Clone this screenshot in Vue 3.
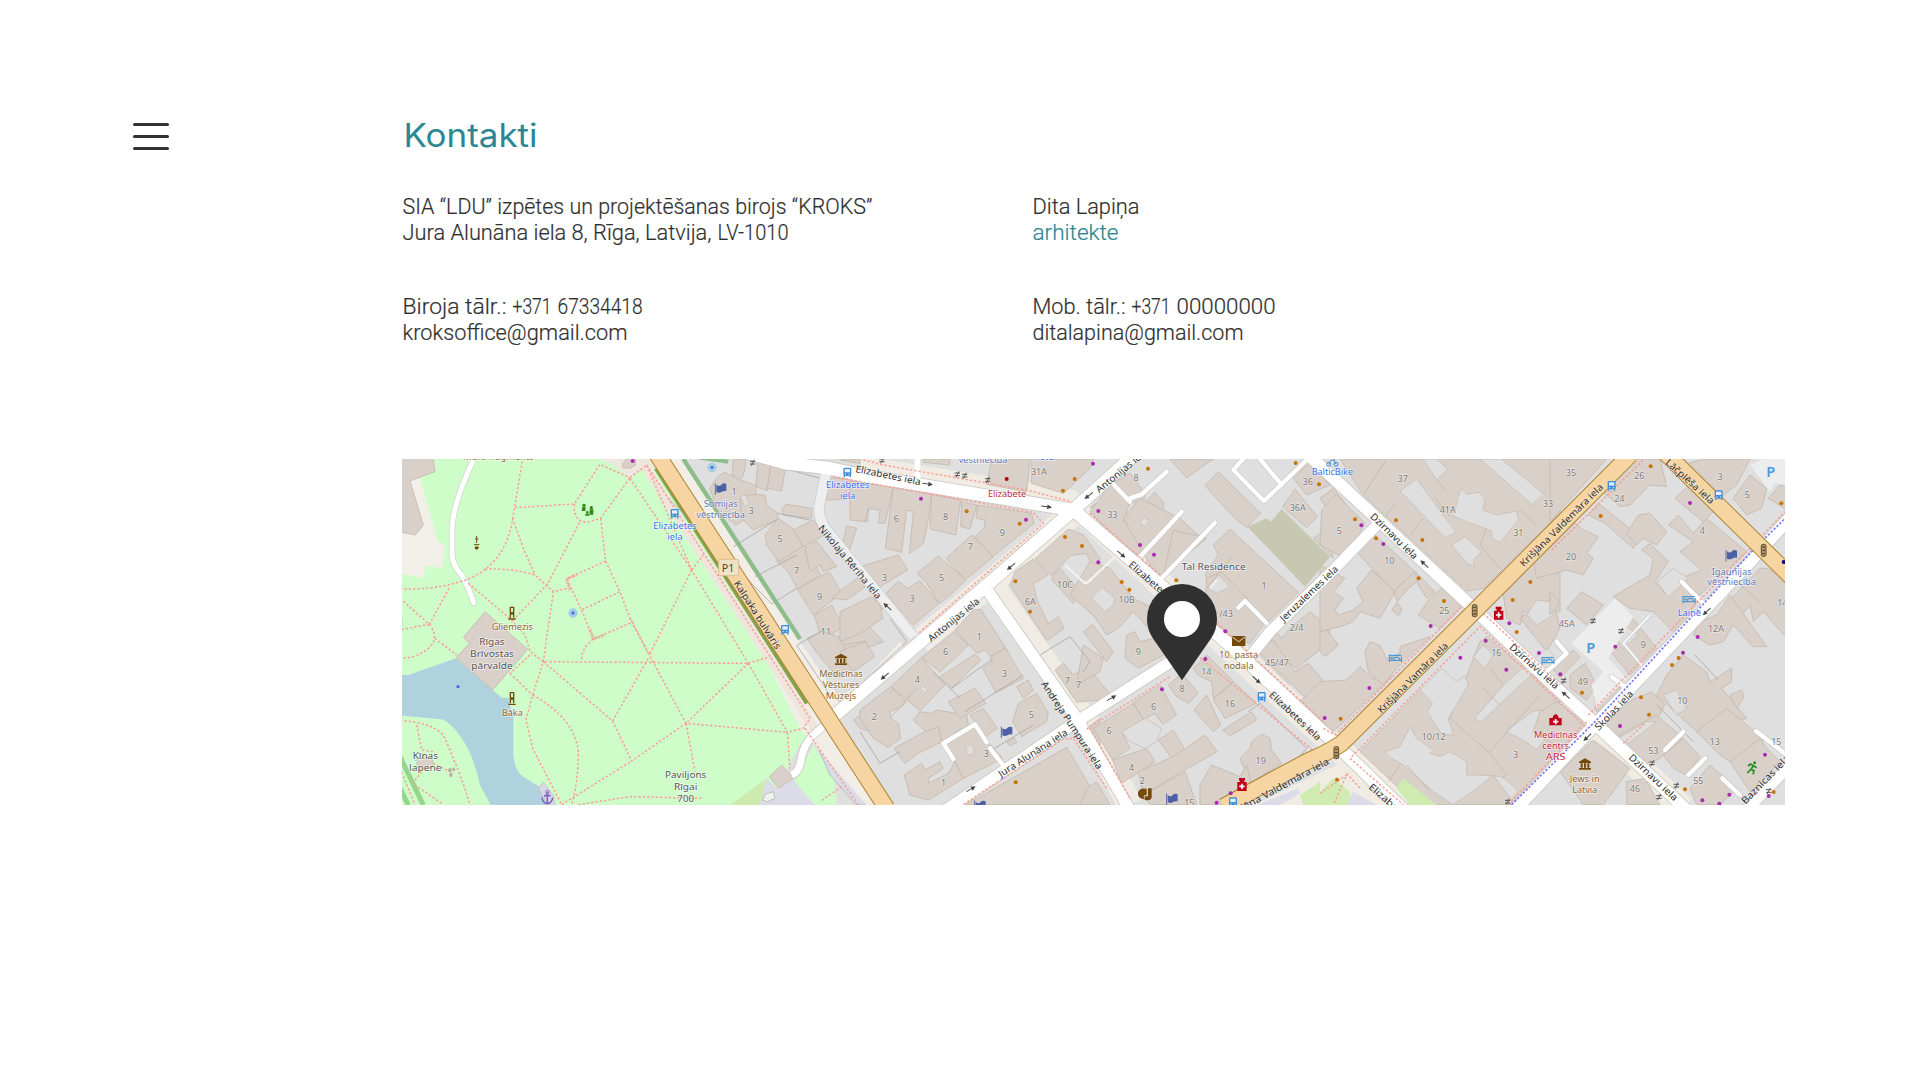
<script setup>
// The map is drawn on a grid of three units per pixel, in six side-by-side tiles.
const TILE = 690

const office = [
  [[['SIA “LDU” izpētes un projektēšanas birojs “KROKS”', 0, 470]], [['Jura Alunāna iela 8, Rīga, Latvija,', 0, 309], ['LV-1010', 315, 71]]],
  [[['Biroja tālr.:', 0, 104], ['+371', 110, 39], ['67334418', 155, 85]], [['kroksoffice@gmail.com', 0, 225]]],
]
const person = [
  [[['Dita Lapiņa', 0, 107]], [['arhitekte', 0, 86]]],
  [[['Mob. tālr.:', 0, 93], ['+371', 99, 39], ['00000000', 144, 99]], [['ditalapina@gmail.com', 0, 211]]],
]

const buildings = [
  [
    '0,0 98,0 105,50 30,78 70,210 46,240 0,230',
    '255,470 340,545 383,583 278,705 168,608 208,565 190,547',
    '50,925 60,908 92,905 100,925 92,938 55,940',
    '680,12 706,12 706,30 690,40 668,38 668,26',
  ],
  [
    '310,12 348,12 345,45 335,70 306,60', '385,12 425,12 412,107 377,95', '425,12 470,12 455,108 412,100',
    '240,100 262,65 285,52 318,70 379,92 375,130 360,180 318,210 262,165',
    '330,125 372,118 405,120 410,150 445,175 440,195 370,225 335,190',
    '405,240 445,190 490,222 525,280 445,320 410,270', '445,320 525,270 572,360 502,402 475,350 440,318',
    '490,225 550,195 582,240 520,275', '525,280 560,258 620,335 580,350 570,330 540,350',
    '502,402 598,350 635,415 550,480', '553,480 605,450 642,515 575,555', '532,550 575,530 625,545 660,600 690,625 625,670 558,590',
    '625,545 700,495 760,560 660,600', '640,570 708,558 718,590 660,625', '455,165 468,148 545,160 545,190 460,180',
    '650,212 680,220 655,295 635,285', '590,65 720,85 715,130 590,135', '690,130 720,130 712,200 680,195',
    '605,430 640,400 690,365 720,385 650,435', '660,475 760,415 775,450 690,512',
    '418,965 455,930 490,970 445,1000', '670,795 710,765 720,760 720,830 690,820',
  ],
  [
    '-30,80 100,95 75,205 55,205 60,165 25,160 15,200 -30,195', '100,95 215,118 205,195 190,265 148,295 160,170 140,165 125,292 76,280',
    '215,118 302,135 287,240 210,222', '305,140 350,150 330,222 302,215', '352,150 515,175 522,205 398,305 345,245 372,220 375,195 348,190',
    '335,240 400,305 315,375 258,310', '235,303 318,375 260,430 238,445 200,385 172,355', '115,378 142,400 180,378 237,445 160,510 78,415',
    '0,335 115,300 143,345 60,395', '-60,470 35,425 60,450 68,490 0,535 -60,560', '-60,590 15,560 45,605 -20,650',
    '-60,12 0,12 0,25 -60,15', '395,12 510,12 500,110 380,88', '515,12 700,12 690,40 610,115 515,85', '190,12 270,12 268,30 190,22',
    '340,465 362,462 438,580 392,605 375,585 350,595 285,525', '283,530 325,570 315,580 240,650 185,607',
    '240,665 345,598 362,615 275,700', '437,580 490,670 408,713 368,640 395,620 390,605',
    '185,607 220,650 255,690 180,767 93,695', '470,695 505,675 520,705 490,730', '475,745 530,715 565,775 560,800 485,845 458,800',
    '0,765 92,695 138,740 125,755 90,770 92,790 115,805 122,850 85,877 40,850 0,790', '160,795 180,770 215,775 230,765 320,780 325,810 235,865',
    '265,740 295,725 345,700 378,745 300,790', '330,780 370,760 412,820 375,845', '102,880 185,835 235,815 245,860 175,895 135,925',
    '133,960 185,925 195,945 240,920 250,940 205,970 205,985 265,955 285,920 310,970 205,1035 150,1020',
    '245,862 340,815 428,910 310,970 285,920', '465,350 520,312 565,360 520,385 530,435 565,505 595,485 612,520 560,557 450,390',
    '525,312 625,222 670,240 720,310 700,345 680,295 630,302 575,362', '580,360 600,340 660,410 640,445 575,375', '650,435 720,365 720,500',
    '670,530 698,508 760,590 740,620 685,550', '585,645 610,625 640,660 680,632 760,730 650,742',
    '318,1049 620,877 670,960 720,1049', '680,820 720,790 720,880', '690,155 740,130 790,170 740,190', '440,862 462,848 470,862 450,872',
  ],
  [
    '60,90 120,55 165,115 160,145 120,140 100,200 210,255 130,310 0,170', '160,145 195,112 222,145 215,190 160,190',
    '100,190 150,130 270,190 330,245 235,335 205,375', '250,225 350,250 220,360', '240,12 370,12 290,68',
    '345,92 385,50 512,175 470,218 435,190', '578,155 615,102 682,185 650,218', '610,70 655,25 720,90 650,120',
    '420,222 625,412 535,500 460,430 430,460 375,420 345,360 385,300 370,270', '350,370 395,350 480,440 520,510 480,565 400,535 345,450',
    '0,320 60,340 130,430 210,470 180,525 130,470 85,520 50,540 10,480 -60,420', '110,540 135,530 150,560 190,550 230,595 145,640 105,610',
    '545,515 575,550 600,520 660,470 720,520 720,560 620,640 545,590 520,600',
    '495,580 550,555 615,650 655,625 720,700 720,800', '-20,570 40,610 30,650 -40,690',
    '235,690 275,655 325,715 295,745 260,725', '310,640 350,600 430,680 370,730 365,680 325,660', '430,680 500,745 405,790 370,735',
    '130,742 210,690 260,780 218,808 195,775 160,795', '10,820 130,745 160,795 95,830 120,880 68,915', '68,915 170,880 195,920 95,985',
    '205,855 250,825 285,885 245,910', '145,950 250,905 345,840 382,890 275,950 160,1020', '312,765 350,720 392,810 370,830',
    '398,825 485,770 500,795 420,842', '450,910 480,880 485,860 515,838 540,850 545,885 575,925 480,985', '330,990 365,930 450,965 470,930 485,990 395,1049 330,1049',
    '160,1020 285,950 320,1049 180,1049', '-10,1000 20,980 60,1049 -30,1049', '670,250 710,220 730,310', '690,130 730,100 770,150 730,190',
  ],
  [
    '60,12 200,12 130,120', '200,12 720,12 720,175 490,400 440,408 130,120',
    '5,165 48,118 135,205 75,310 0,270',
    '110,290 165,240 285,350 220,410', '220,410 285,350 305,370 265,400 232,440', '285,350 345,410 320,430 295,390', '330,430 370,395 430,450 360,520 295,480',
    '0,330 75,370 40,410 70,430 45,465 55,480 100,465 130,440 110,400 155,345 225,410 180,490 120,470 100,500 60,515 0,530', '0,530 20,525 55,570 15,605 0,590',
    '215,465 232,442 246,465 235,482', '0,680 80,675 120,635 165,675 180,650 215,665 40,830 -60,740',
    '135,590 150,560 180,570 200,612 240,595 240,575 330,545 230,640 190,690 145,650',
    '120,890 300,705 390,790 480,560 500,545 720,730 720,900 590,1049 290,1049',
    '545,380 720,200 720,470 610,470 600,510 560,490',
    '600,490 660,450 700,430 720,520 680,590',
  ],
  [
    '0,12 170,12 0,200', '195,12 330,12 350,95 300,90 240,150 210,155 145,100', '115,180 145,145 270,245 250,280 165,205',
    '375,130 430,80 490,170 460,200', '400,30 460,12 600,12 560,90 480,150', '550,130 600,60 650,100 635,160 590,180', '655,130 690,90 720,100 720,170',
    '-60,260 75,205 100,225 145,245 110,295 130,310 100,360 50,345 -40,370', '230,235 265,180 300,175 350,230 320,270 280,250 260,270',
    '275,285 300,265 355,320 315,380 350,420 370,395 400,385 440,440 380,540 310,470 240,460 190,425 300,360 310,310', '355,210 385,180 430,235 470,190 590,290 450,420 390,370 455,345 390,290 430,260',
    '170,575 245,485 320,580 240,660', '50,460 95,410 160,450 110,510', '0,410 30,440 0,480',
    '60,660 105,625 140,690 110,735 60,700', '0,630 70,585 90,605 30,670', '545,430 630,340 655,340 720,390 720,560 640,470 610,500 600,450 575,480',
    '430,540 450,500 500,480 540,420 650,575 610,575 550,510 520,560 480,570', '350,660 400,600 470,650 480,680 545,640 545,680 515,700 590,790 440,830 320,720',
    '540,720 575,705 582,725 560,760', '440,830 530,760 640,850 600,960 510,900',
    '245,735 305,710 345,750 300,830 185,850 170,800', '190,850 320,780 400,850 330,910 280,930',
    '340,900 400,850 450,905 410,960 370,940', '30,950 130,855 240,940 160,1049 100,1049', '230,980 285,970 330,1049 230,1049', '420,1000 480,930 560,1000 510,1049 440,1049',
    '540,920 630,850 650,880 690,920 600,1010', '-30,770 20,740 100,800 50,890 -50,830', '130,700 185,670 225,715 140,770',
  ],
]

// courtyards cut into the blocks
const yards = [
  [], ['330,125 345,118 358,145 345,155'],
  ['180,700 188,690 202,705 195,715', '318,880 330,868 343,880 340,898 322,900'],
  ['5,430 35,395 75,430 70,450 45,470', '150,205 162,185 178,200 165,215', '355,400 385,360 420,395 380,415', '95,830 165,790 215,820 200,860 165,880 120,860'],
  [
    '240,108 290,72 408,232 375,248', '415,125 425,100 440,118 480,112 495,135 488,165 530,180 590,168 595,195 540,262 515,250 515,228 440,200 395,180 410,150',
    '480,12 545,12 675,120 640,152', '310,12 350,12 383,42 350,75', '395,270 435,245 485,290 460,315 465,335 440,325',
    '460,605 490,570 520,600 495,640', '300,705 365,640 410,680 435,663 445,690 385,790 400,840 365,838 322,770 338,745', '462,792 560,680 680,580 700,600 590,700 485,800',
    '195,890 240,875 270,815 290,850 340,885 330,895 360,905 390,890 440,920 440,960 480,960 545,965 595,1005 575,1035 520,960 470,1000 400,1049 340,1010 250,930 215,910',
    '555,830 640,768 695,765 715,800 650,885 625,865 590,845', '620,480 650,435 690,440 700,480 650,510',
  ],
  ['320,380 370,340 415,370 355,425', '340,720 380,705 410,760 380,780', '200,550 230,515 265,540 220,580', '290,800 320,800 235,865 205,850'],
]

const seams = 'M2985,145L2945,200M3070,190L3030,240M3105,130L3150,185M3260,220L3240,270L3300,340M3360,165L3410,215M3110,75L3140,110M3395,150L3440,105M3000,930L2965,980M3020,930L3090,1010M3150,790L3270,895L3320,960L3305,970M3270,890L3420,720M3270,640L3310,690M3250,700L3300,750M2370,275L2320,330M2500,300L2420,400M2560,580L2670,690M3960,340L4080,440M1550,700L1470,790'

const park = '0,0 760,0 1280,840 1200,870 1150,960 1200,980 1180,1060 0,1060'

const whiteRoads = [
  { d: 'M1030,-10 L1160,25 L1290,40 L1380,60 L2020,165 L2480,562 L2800,860 L3010,1065', w: 38 },
  { d: 'M2225,-20 L2020,165 L1755,395 L1275,806', w: 38 },
  { d: 'M1765,410 L2030,790 L2190,1065', w: 34 },
  { d: 'M1640,1063 L2030,800 L2300,628 L2400,560', w: 34 },
  { d: 'M2550,605 L2610,530 L2800,345 L2935,205', w: 32 },
  { d: 'M2715,-10 L2930,190 L3215,455 L3460,690 L3590,810 L3860,1065', w: 36 },
  { d: 'M3345,1065 L3575,820 L3690,700 L4060,310 L4190,165', w: 36 },
  { d: 'M4040,1065 L4170,930', w: 32 },
  { d: 'M1280,808 Q1215,850 1205,905 Q1200,950 1175,960', w: 22 },
]

const alleys = [
  'M1660,912 L1630,865 L1725,808 L1760,862', 'M1770,880 L1805,925',
  'M2140,88 L2190,140 M2190,130 L2225,118 L2300,50', 'M2220,305 L2345,170', 'M2280,375 L2445,203', 'M2600,505 L2535,438 L2515,458',
  'M2540,0 L2500,45 L2592,138 L2720,15 M2570,0 L2645,90', 'M3470,560 L3500,595 L3440,650',
  'M3845,380 L3915,450', 'M3795,885 L3850,830', 'M3865,960 L3915,910', 'M3967,970 L4020,1020', 'M4068,828 L4160,900', 'M3635,665 L3680,700',
]

const footpaths = [
  'M0,402 Q120,405 210,370 Q320,320 338,190 L368,12', 'M345,158 L523,147 L600,28 L690,68', 'M523,147 Q520,200 560,202 L602,190 L690,68',
  'M338,190 L370,280 L405,360 M255,343 Q330,338 405,360 L460,410', 'M538,203 L442,388 L335,500', 'M602,190 L617,318 L660,410 L690,490 L748,600',
  'M617,318 L500,372 L545,465 L660,410', 'M500,400 L460,410 L430,620 L398,720 L378,795 L398,880 L485,1049', 'M545,465 L580,552 L700,500 M580,552 Q545,580 545,612',
  'M205,385 L335,495 L375,540 L390,590 L430,620 L1040,625', 'M430,620 L638,798 L745,610', 'M638,798 L695,918 L858,805', 'M398,720 Q525,790 535,890 Q535,980 515,1049',
  'M485,1049 L695,918 M535,1049 L690,1025 L910,1030', 'M330,655 L398,720 M390,600 L330,655', 'M0,430 L88,508 Q120,550 85,580 Q50,610 0,610 M88,508 L0,525 M88,508 L150,395 M105,550 L170,600',
  'M0,797 Q90,800 130,840 Q180,950 210,1049 M50,810 L65,885 L100,890 M100,925 L160,955 M65,950 L38,985 L130,1049 M0,940 L45,1049',
  'M690,68 L740,30 L875,345 L1045,625 M690,490 L748,600 L858,805 L1162,832 L1170,940', 'M740,30 L1230,790 L1210,820 L1162,832', 'M875,345 L910,300 M875,345 L748,600 M1045,625 L1110,605 M1045,625 L858,805 L885,950 M1045,625 L1162,832',
  'M690,70 L875,345', 'M1215,820 L1375,1049 M1325,995 L1260,1040', 'M1390,15 L1450,30 L1880,105 L2015,140', 'M1300,65 L1380,80 L1900,172 L1930,205 L1555,535',
  'M1680,1055 L1990,852 L2020,850 L2120,1000', 'M2060,822 L2310,665 M2070,820 L2190,1030', 'M2070,175 L2280,360 M2440,495 L2770,800 M2390,600 L2750,895', 'M2760,1015 L2840,960 L2800,1049',
  'M2770,820 L2805,840 L3185,455', 'M2855,905 L3240,515 L3560,820 M3250,475 L3480,690', 'M2850,910 L3010,1049',
  'M3455,285 L3730,15', 'M3565,780 L4050,280 L4155,170', 'M3325,1049 L3560,800', 'M3670,865 L3735,805', 'M2840,955 L2880,1000',
]

const outlines = [
  'M1000,275 L1130,195 M1065,365 L1190,300 M805,130 L1115,447 L1190,400 M1190,570 L1290,720 L1320,740 L1500,590 M1192,570 L1270,525', 'M1133,175 L1230,195', 'M1065,15 L1260,70',
  'M1600,650 L1680,730 M1655,700 L1780,610 M1695,770 L1870,660', 'M1380,830 L1440,925 L1500,890 M1750,900 L1900,810', 'M1920,600 L2010,545 L2070,620 L2050,650 M1920,600 L2000,730',
  'M2545,770 L2580,745 L2720,880 L2690,915 L2560,990', 'M3885,600 L3955,675 M3770,750 L3880,860', 'M1470,490 L1520,560 L1390,680',
]

const streets = [
  [1008, 380, 1135, 580, 'Kalpaka bulvāris'], [1260, 215, 1438, 428, 'Nikolaja Rēriha iela'],
  [1367, 42, 1562, 82, 'Elizabetes iela'], [1588, 555, 1735, 435, 'Antonijas iela'], [1930, 682, 2100, 940, 'Andreja Pumpura iela'],
  [1798, 960, 2000, 830, 'Jura Alunāna iela'], [2092, 108, 2225, -1, 'Antonijas iel'], [2190, 325, 2285, 408, 'Elizabete'],
  [2612, 715, 2758, 852, 'Elizabetes iela'], [2645, 495, 2810, 338, 'Jeruzalemes iela'], [2525, 1060, 2785, 918, 'jāna Valdemāra iela'],
  [2915, 180, 3048, 308, 'Dzirnavu iela'], [3365, 330, 3605, 92, 'Krišjāna Valdemāra iela'], [2938, 770, 3140, 568, 'Krišjāna Vamāra iela'],
  [3332, 572, 3472, 697, 'Dzirnavu iela'], [3800, 18, 3938, 142, 'Lāčplēša iela'], [3590, 822, 3695, 712, 'Skolas iela'],
  [3690, 903, 3828, 1033, 'Dzirnavu iela'], [4030, 1043, 4165, 905, 'Baznicas iela'], [2910, 992, 3000, 1070, 'Elizabet'],
].map(([x1, y1, x2, y2, t]) => ({
  t, x: (x1 + x2) / 2, y: (y1 + y2) / 2,
  a: (Math.atan2(y2 - y1, x2 - x1) * 180) / Math.PI, l: Math.hypot(x2 - x1, y2 - y1),
}))

const names = [
  [295, 16, 'Mūra fragments', 'brown', 212], [337, 526, 'Gliemezis', 'brown', 124], [276, 571, 'Rīgas', 'dark', 76], [276, 607, 'Brīvostas', 'dark', 132], [276, 643, 'pārvalde', 'dark', 124],
  [337, 782, 'Bāka', 'brown', 62], [76, 912, 'Ķīnas', 'dark', 76], [76, 949, 'lapene', 'dark', 98],
  [825, 221, 'Elizabetes', 'blue', 130], [825, 254, 'iela', 'blue', 46], [962, 156, 'Somijas', 'violet', 102], [962, 189, 'vēstniecība', 'violet', 146],
  [1343, 99, 'Elizabetes', 'blue', 130], [1343, 132, 'iela', 'blue', 46], [1323, 665, 'Medicīnas', 'brown', 130], [1323, 698, 'Vēstures', 'brown', 110], [1323, 731, 'Muzejs', 'brown', 92],
  [857, 968, 'Paviljons', 'dark', 124], [857, 1005, 'Rīgai', 'dark', 70], [857, 1041, '700', 'dark', 50],
  [1749, 25, 'vēstniecība', 'violet', 146], [1821, 127, 'Elizabete', 'red', 114], [1933, 16, 'Hotel', 'blue', 70],
  [2441, 345, 'Tal Residence', 'dark', 192], [2516, 608, '10. pasta', 'brown', 116], [2516, 641, 'nodaļa', 'brown', 90],
  [2797, 60, 'BalticBike', 'blue', 124], [3467, 850, 'Medicīnas', 'red', 130], [3467, 883, 'centrs', 'red', 80], [3467, 915, 'ARS', 'red', 60],
  [3995, 360, 'Igaunijas', 'violet', 120], [3995, 391, 'vēstniecība', 'violet', 146], [3868, 482, 'Lainē', 'blue', 70], [3554, 982, 'Jews in', 'brown', 90], [3554, 1015, 'Latvia', 'brown', 74],
]

const numbers = [
  [],
  [[312, 110, '1'], [363, 168, '3'], [450, 252, '5'], [500, 346, '7'], [569, 424, '9'], [588, 530, '11']],
  [[109, 192, '6'], [257, 185, '8'], [427, 233, '9'], [331, 275, '7'], [245, 368, '5'], [73, 369, '3'], [156, 430, '3'], [257, 591, '6'], [358, 544, '1'], [172, 673, '4'], [433, 657, '3'], [43, 785, '2'], [514, 779, '5'], [379, 896, '3'], [251, 982, '1'], [537, 50, '31A'], [511, 440, '6A'], [615, 390, '10C'], [622, 677, '7'], [656, 688, '7']],
  [[138, 69, '8'], [67, 179, '33'], [110, 433, '10B'], [145, 591, '9'], [522, 393, '1'], [408, 476, '/43'], [620, 518, '2/4'], [561, 623, '45/47'], [349, 651, '14'], [276, 701, '8'], [191, 756, '6'], [420, 747, '16'], [57, 827, '6'], [125, 938, '4'], [157, 976, '2'], [512, 917, '19'], [298, 1042, '15'], [653, 81, '36'], [623, 157, '36A']],
  [[248, 70, '37'], [383, 165, '41A'], [684, 147, '33'], [595, 233, '31'], [58, 227, '5'], [208, 317, '10'], [373, 468, '25'], [529, 594, '16'], [341, 844, '10/12'], [587, 898, '3']],
  [[63, 52, '35'], [268, 61, '26'], [208, 132, '24'], [510, 65, '3'], [592, 119, '5'], [457, 228, '4'], [63, 306, '20'], [50, 506, '45A'], [280, 568, '9'], [498, 521, '12A'], [98, 679, '49'], [397, 738, '10'], [494, 861, '13'], [310, 887, '53'], [445, 978, '55'], [255, 1001, '46'], [679, 861, '15'], [697, 443, '14']],
]

const O = '#c77400'
const P = '#a82bb0'
const dots = [
  [698, 18, P], [1563, 131, P], [1700, 169, O], [1859, 206, O], [1878, 194, P], [1820, 72, '#b00014'], [2024, 72, O], [1989, 107, O], [2079, 26, P],
  [1995, 246, O], [2046, 273, O], [1846, 379, O], [1890, 470, O], [1847, 982, O], [2095, 168, P], [2244, 41, O], [2095, 322, P], [2220, 270, P], [2262, 299, P],
  [2329, 376, O], [2165, 381, O], [2188, 404, O], [2476, 529, P], [2416, 612, P], [2286, 703, P], [2687, 24, O], [2757, 88, O], [2774, 789, P], [2492, 1015, P], [2450, 1043, P],
  [2865, 193, O], [2884, 211, P], [2988, 196, O], [3067, 255, O], [2928, 250, O], [2950, 267, P], [3056, 370, O], [3132, 438, O], [3092, 513, P], [3391, 381, O], [3338, 435, O],
  [3328, 505, P], [3350, 531, O], [3257, 557, P], [3181, 608, P], [3319, 644, P], [3417, 594, P], [2908, 699, P], [2822, 791, O], [2811, 974, O],
  [3752, 34, O], [3602, 183, O], [3870, 144, P], [4144, 145, O], [3646, 575, P], [3893, 546, P], [3849, 593, P], [3836, 609, O], [3816, 630, O], [3481, 658, P], [3546, 713, O],
  [3723, 727, O], [3747, 779, O], [3660, 813, P], [4095, 899, P], [3855, 1003, O], [3907, 1036, P], [3958, 1046, P], [3988, 1019, P], [4121, 1011, O], [4106, 1023, P],
]

const arrows = [[1583, 87, 8], [1940, 155, 8], [1833, 335, 140], [1462, 455, 222], [1454, 664, 140], [1713, 1002, -30], [2164, 298, 40], [2135, 729, -30], [2570, 675, 42], [3073, 327, 223], [3920, 470, 137], [3562, 847, 137], [3497, 720, 222], [2066, 122, 142]]
const buses = [[824, 176], [1155, 524], [1342, 52], [2585, 725], [2499, 1041], [3635, 92], [3956, 120]]
const flags = [[962, 100], [1820, 830], [1740, 1052], [2316, 1031], [3994, 300]]
const museums = [[1323, 614], [3555, 928]]
const beds = [[2986, 610], [3444, 617], [3867, 434]]
const lights = [[3224, 467], [2809, 893], [4091, 286]]
const statues = [[336, 475], [336, 731]]
const gates = [[1058, 23], [1446, 16], [1672, 58], [1694, 62], [1763, 75], [3579, 498], [3663, 528], [3491, 677], [3756, 925], [3829, 992], [3777, 1026], [4106, 1008], [4223, 880], [3323, 1040]]
</script>

<template>
  <div class="page">
    <button class="menu" type="button" aria-label="Izvēlne">
      <span></span><span></span><span></span>
    </button>
    <main class="content">
      <h1><svg width="136" height="44"><text x="1.5" y="34" textLength="134" lengthAdjust="spacingAndGlyphs">Kontakti</text></svg></h1>
      <section class="contacts">
        <div v-for="(column, c) in [office, person]" :key="c" class="column">
          <div v-for="(block, b) in column" :key="b" class="block">
            <svg v-for="line in block" :key="line[0][0]" :class="['line', { accent: line[0][0] === 'arhitekte' }]" width="480" height="26">
              <text v-for="part in line" :key="part[0]" :x="part[1] + 0.5" y="21" :textLength="part[2]" lengthAdjust="spacingAndGlyphs">{{ part[0] }}</text>
            </svg>
          </div>
        </div>
      </section>

      <svg class="map" viewBox="6 12 4149 1038" preserveAspectRatio="none">
        <defs>
          <g id="bus"><rect x="-12" y="-14" width="24" height="25" rx="4" fill="#3d8fd9" /><rect x="-8" y="-10" width="16" height="10" fill="#e4eefa" /><path d="M-9 11v4M9 11v4" stroke="#3d8fd9" stroke-width="4" /><path d="M-7 6h3M4 6h3" stroke="#fff" stroke-width="3" /></g>
          <g id="flag"><path d="M-16 -15V19" stroke="#5868a8" stroke-width="3" /><path d="M-13 -11Q-4 -4 2 -11T17 -13V8Q8 7 2 11T-13 11Z" fill="#4d60a4" /></g>
          <g id="museum" fill="#734a08"><path d="M-18 -8L0 -18L18 -8V-4H-18Z" /><path d="M-13 -3h6V10h-6zM-3 -3h6V10h-6zM7 -3h6V10h-6zM-18 11h36v5h-36z" /></g>
          <g id="bed" fill="none" stroke="#2f8fd8" stroke-width="3"><path d="M-18 -11V11M-18 6H18M18 11V-5M-18 -9H18M-4 5V-3H10L14 5" /><circle cx="-11" cy="-1" r="2.5" /></g>
          <g id="light"><rect x="-7" y="-18" width="14" height="36" rx="5" fill="#b99a67" stroke="#5a4a33" stroke-width="3" /><path d="M-4 -10h8M-4 0h8M-4 10h8" stroke="#5a4a33" stroke-width="4" /></g>
          <g id="statue"><path d="M-7 -18H7M-11 17H11" stroke="#734a08" stroke-width="4" /><path d="M-5 -16V13M5 -16V13M-5 -4L5 4M5 -4L-5 4" fill="none" stroke="#734a08" stroke-width="4" /></g>
          <g id="arrow"><path d="M-16 0H8" stroke="#444" stroke-width="3" /><path d="M2 -7L16 0L2 7Z" fill="#444" /></g>
          <g id="gate"><path d="M-8 -4H8M-8 4H8M-4 9L5 -9" stroke="#555" stroke-width="3" /></g>
        </defs>

        <rect width="4200" height="1100" fill="#dfdfdf" />
        <polygon :points="park" fill="#cefdca" />
        <path d="M60,70L115,262L135,270L128,340L78,332L70,370L0,355V60Z" fill="#f2eee8" />
        <path d="M600,10H760L770,100L730,40L690,68L640,30Z" fill="#eee7df" />
        <path d="M0,660H25L168,610L278,705L305,728H325L340,790V900Q345,950 370,965L418,995L440,1050H272L240,990Q220,900 185,850Q150,800 125,793L0,782Z" fill="#b0d2df" />
        <path d="M415,1000L430,982L460,1020L465,1050H445Z" fill="#dadae6" stroke="#b9b1c6" stroke-width="2" />
        <path d="M0,905L70,1050M0,1000L25,1050" stroke="#94d68b" stroke-width="15" />
        <path d="M0,480Q12,500 0,525" stroke="#b2e9aa" stroke-width="5" fill="none" />
        <path d="M990,1050L1100,970L1150,1050Z" fill="#cdebaf" />
        <path d="M1100,970L1130,1000L1175,960L1220,1050H1080Z" fill="#dcdce8" />
        <path d="M1185,980L1240,870L1300,960L1310,1050H1240Z" fill="#cefdca" />
        <path d="M1205,1005L1185,980L1130,1030L1150,1050H1245Z" fill="#dcdce8" />
        <path d="M1245,858L1280,856L1460,1050H1370L1290,960Z" fill="#dcdce8" stroke="#aaa" stroke-width="2" />
        <path d="M1088,1035L1095,1018L1120,1010L1125,1030L1102,1040Z" fill="#eef3e5" stroke="#aaa" stroke-width="2" />
        <path d="M803,12H845L1200,560L1315,725L1380,690L1500,560L1520,590L1300,800L1470,1050H1400L1200,820Z" fill="#f2eee7" />
        <path d="M725,20L1250,830" stroke="#efe5dc" stroke-width="26" />
        <path d="M768,40L1221,745" stroke="#86a34c" stroke-width="13" />
        <path d="M850,12L1200,552" stroke="#8dbd8b" stroke-width="13" />
        <path d="M900,8L985,20" stroke="#8dbd8b" stroke-width="12" />
        <path d="M1380,40L2010,142L2080,200L2900,960L3010,1060M2020,175L1560,560M1780,400L2060,800M2190,1050L2060,800M3580,810L3850,1060" fill="none" stroke="#f0ece4" stroke-width="76" />
        <path d="M2540,1060L2830,920L2880,990L2960,1060Z" fill="#f0ece4" />

        <g v-for="(tile, i) in buildings" :key="'b' + i" :transform="`translate(${i * TILE} 0)`">
          <polygon v-for="(p, n) in tile" :key="n" :points="p" class="building" />
          <polygon v-for="(p, n) in yards[i]" :key="'y' + n" :points="p" class="yard" />
        </g>
        <path :d="seams" fill="none" stroke="#c5b8ac" stroke-width="2.5" />

        <path d="M2542,215L2600,190L2612,200L2645,162L2790,305L2715,395Z" fill="#c6c8b1" />
        <path d="M3515,565L3645,430L3700,485L3625,610L3680,670L3590,760L3575,690L3610,650Z" fill="#ededed" />
        <path d="M4050,30L4090,12H4160V90L4125,85L4110,110Z" fill="#ededed" />
        <path d="M2760,1050V1010L2800,970L2850,1010L2855,1050ZM2990,1000L3010,970L3110,1050H3030Z" fill="#ceecaf" />
        <path d="M2570,1050L2695,1000L2700,1015L2640,1050Z" fill="#dcdce8" />
        <path d="M2710,1050L2700,1020L2760,980V1050Z" fill="#ceecaf" />
        <path d="M2840,1050L2860,1010L2930,1050Z" fill="#dcdce8" />
        <path d="M3750,480L3670,565L3745,655L3685,720" fill="none" stroke="#ccc" stroke-width="10" />
        <path d="M3750,480L3670,565L3745,655L3685,720" fill="none" stroke="#f8f8f8" stroke-width="6" />

        <path v-for="d in outlines" :key="d" :d="d" fill="none" stroke="#a9a6a3" stroke-width="2.5" />

        <g fill="none" stroke-linejoin="round">
          <path v-for="r in whiteRoads" :key="'c' + r.d" :d="r.d" stroke="#cbc7c2" :stroke-width="r.w + 5" />
          <path d="M1280,45L1258,150Q1252,190 1280,225L1540,545" stroke="#cfcfcf" stroke-width="34" />
          <path d="M1280,45L1258,150Q1252,190 1280,225L1540,545" stroke="#eee" stroke-width="29" />
          <path d="M1552,12V70" stroke="#fff" stroke-width="17" />
          <g stroke-linecap="round">
            <path v-for="d in alleys" :key="'a' + d" :d="d" stroke="#cbc7c2" stroke-width="17" />
            <path v-for="d in alleys" :key="'w' + d" :d="d" stroke="#fff" stroke-width="13" />
            <path d="M225,5Q155,150 156,230V300Q158,330 185,360Q205,395 221,443" stroke="#c9d5c5" stroke-width="19" />
            <path d="M225,5Q155,150 156,230V300Q158,330 185,360Q205,395 221,443" stroke="#fff" stroke-width="15" />
          </g>
          <path d="M2060,385L2145,305M1995,330L2055,385L2075,375M2430,400L2450,375" stroke="#f3f1ee" stroke-width="7" />
          <path v-for="r in whiteRoads" :key="r.d" :d="r.d" stroke="#fff" :stroke-width="r.w" />
          <g class="footpaths">
            <path v-for="d in footpaths" :key="d" :d="d" />
            <path d="M500,372L530,360M500,372L510,408M580,552L570,522M580,552L615,540" stroke-width="9" stroke-dasharray="3 3" />
          </g>
          <path d="M3335,1049L3590,795L4050,295L4155,190" stroke="#7777ff" stroke-width="5" stroke-dasharray="7 5" />
          <path d="M766,-10L1460,1060M2470,1055L2720,920Q2785,892 2825,865L3225,467L3690,0M3790,-12L4190,382" stroke="#ab8431" stroke-width="52" />
          <path d="M766,-10L1460,1060M2470,1055L2720,920Q2785,892 2825,865L3225,467L3690,0M3790,-12L4190,382" stroke="#f7d5a2" stroke-width="46" />
        </g>

        <circle v-for="(d, i) in dots" :key="'d' + i" :cx="d[0]" :cy="d[1]" r="6" :fill="d[2]" />
        <g v-for="p in [[519, 474], [936, 37]]" :key="p[0]"><circle :cx="p[0]" :cy="p[1]" r="14" fill="#a3cfe6" /><circle :cx="p[0]" :cy="p[1]" r="5" fill="#4a76d8" /></g>
        <circle cx="174" cy="695" r="5" fill="#4a6fd8" />
        <circle cx="4151" cy="321" r="6" fill="#150080" />

        <use v-for="p in arrows" :key="p.join()" href="#arrow" :transform="`translate(${p[0]} ${p[1]}) rotate(${p[2]})`" />
        <use v-for="p in buses" :key="p.join()" href="#bus" :x="p[0]" :y="p[1]" />
        <use v-for="p in flags" :key="p.join()" href="#flag" :x="p[0]" :y="p[1]" />
        <use v-for="p in museums" :key="p.join()" href="#museum" :x="p[0]" :y="p[1]" />
        <use v-for="p in beds" :key="p.join()" href="#bed" :x="p[0]" :y="p[1]" />
        <use v-for="p in lights" :key="p.join()" href="#light" :x="p[0]" :y="p[1]" />
        <use v-for="p in statues" :key="p.join()" href="#statue" :x="p[0]" :y="p[1]" />
        <use v-for="p in gates" :key="p.join()" href="#gate" :x="p[0]" :y="p[1]" />

        <!-- monument, playground, anchor, cottage, mail, theatre, pharmacies, clinic, runner, bicycle -->
        <path d="M230,243V264M225,252H235M222,269H238M225,276H235L233,282H227Z" fill="#734a08" stroke="#734a08" stroke-width="3" />
        <g fill="#2e8b14"><circle cx="552" cy="151" r="5" /><circle cx="574" cy="158" r="5" /><circle cx="562" cy="172" r="4" /><path d="M547,156H557L556,168H545ZM569,163H580V179H569ZM556,176H568V182H556Z" /></g>
        <path d="M442,1012V1044M432,1022H452M426,1028Q428,1044 442,1046Q456,1044 458,1028" fill="none" stroke="#8461c4" stroke-width="5" /><circle cx="442" cy="1011" r="5" fill="none" stroke="#8461c4" stroke-width="3" />
        <path d="M145,940h10v10h-10zM158,938h7v10h-7zM148,955h9v10h-9z" fill="#b9aaa0" />
        <rect x="2496" y="543" width="40" height="30" fill="#734a08" /><path d="M2497,546L2516,560L2535,546" fill="none" stroke="#e6ddd4" stroke-width="3" />
        <path d="M2216,1013Q2220,1000 2238,1003V1018Q2226,1018 2230,1030Q2214,1028 2216,1013ZM2246,1002H2253V1028Q2250,1036 2236,1033V1026L2246,1026Z" fill="#734a08" stroke="#734a08" stroke-width="4" />
        <g v-for="p in [[2526, 990], [3296, 476]]" :key="p[0]" :transform="`translate(${p[0]} ${p[1]})`"><path d="M-9 -21H9V-13H6V-9H14V18H-14V-9H-6V-13H-9Z" fill="#bf0016" /><path d="M0 -4V12M-8 4H8" stroke="#fff" stroke-width="5" /></g>
        <path d="M3448,789H3458Q3460,778 3467,778Q3474,778 3476,789H3485V811H3448Z" fill="#bf0016" /><path d="M3467,792V808M3459,800H3475" stroke="#fff" stroke-width="5" />
        <g transform="translate(4056 938)" fill="none" stroke="#1c901c" stroke-width="5"><circle cx="8" cy="-15" r="2" /><path d="M-12 -5L-4 -11L4 -6L-3 5L-14 16M-3 5L6 9L3 20M4 -6L14 0" /></g>
        <g fill="none" stroke="#3d8fd9" stroke-width="3"><circle cx="2786" cy="28" r="6" /><circle cx="2808" cy="28" r="6" /><path d="M2786,28L2792,16H2803L2808,28M2803,16V11" /></g>
        <g class="parking"><text x="3572" y="595">P</text><text x="4112" y="65">P</text></g>

        <rect x="956" y="313" width="60" height="49" rx="4" fill="#f1e1c6" stroke="#d9bd8d" stroke-width="3" />
        <text class="route" x="984" y="350">P1</text>

        <g v-for="(tile, i) in numbers" :key="'n' + i" class="number" :transform="`translate(${i * TILE} 0)`">
          <text v-for="(n, k) in tile" :key="k" :x="n[0]" :y="n[1] + 10">{{ n[2] }}</text>
        </g>
        <text v-for="(s, i) in streets" :key="'s' + i" class="street" :textLength="s.l" lengthAdjust="spacingAndGlyphs" y="9" :transform="`translate(${s.x} ${s.y}) rotate(${s.a})`">{{ s.t }}</text>
        <text v-for="(n, i) in names" :key="'l' + i" :class="['name', n[3]]" :x="n[0]" :y="n[1]" :textLength="n[4]" lengthAdjust="spacingAndGlyphs">{{ n[2] }}</text>

        <g transform="translate(2070 0)">
          <path d="M276,676L190,552Q171,525 171,492A105,105 0 0 1 381,492Q381,525 362,552Z" fill="#303030" />
          <circle cx="276" cy="492" r="54" fill="#fff" />
        </g>
      </svg>
    </main>
  </div>
</template>

<style>
body {
  background: #fff;
}
</style>

<style scoped>
.page {
  box-sizing: border-box;
  width: 1920px;
  height: 1080px;
  overflow: hidden;
  display: flex;
  align-items: flex-start;
  padding: 113px 0 0 133px;
  background: #fff;
  color: #303030;
}
.menu {
  display: flex;
  flex-direction: column;
  gap: 9px;
  width: 36px;
  margin: 9.5px 233px 0 0;
  padding: 0;
  border: 0;
  background: none;
}
.menu span {
  height: 3px;
  border-radius: 2px;
  background: #333;
}
.content {
  width: 1383px;
}
h1 {
  margin: 0;
  height: 44px;
}
h1 svg,
.line,
.map {
  display: block;
}
h1 svg {
  overflow: visible;
}
h1 text {
  font: 400 32px Inter, sans-serif;
  fill: #2a8793;
}
.contacts {
  display: flex;
  margin-top: 36px;
}
.column {
  width: 630px;
}
.block {
  height: 100px;
}
.line {
  overflow: visible;
  font: 300 22.5px Roboto, sans-serif;
  fill: #303030;
  stroke: #303030;
  stroke-width: 0.2px;
}
.line.accent {
  fill: #2a8793;
  stroke: #2a8793;
}
.map {
  width: 1383px;
  height: 346px;
  margin-top: 66px;
  overflow: hidden;
}
.building {
  fill: #d9d0c9;
  stroke: #c5b8ac;
  stroke-width: 2.5;
}
.yard {
  fill: #dfdfdf;
  stroke: #c5b8ac;
  stroke-width: 2;
}
.footpaths {
  stroke: #fa9f96;
  stroke-width: 4.5;
  stroke-dasharray: 7 6;
}
.map text {
  font-family: "Noto Sans", sans-serif;
  text-anchor: middle;
  paint-order: stroke;
  stroke-linejoin: round;
}
.street {
  font-size: 29px;
  fill: #2e2e2e;
  stroke: rgba(255, 255, 255, 0.35);
  stroke-width: 4px;
}
.number {
  font-size: 27px;
  fill: #777;
  stroke: rgba(255, 255, 255, 0.5);
  stroke-width: 4px;
}
.name {
  font-size: 29px;
  stroke: rgba(255, 255, 255, 0.6);
  stroke-width: 5px;
}
.dark { fill: #555; }
.brown { fill: #8a6730; }
.blue { fill: #3a70ef; }
.violet { fill: #6676b8; }
.red { fill: #c62a3c; }
.route {
  font-size: 32px;
  fill: #51452c;
}
.parking {
  font-size: 44px;
  font-weight: 600;
  fill: #4a9be0;
}
</style>
